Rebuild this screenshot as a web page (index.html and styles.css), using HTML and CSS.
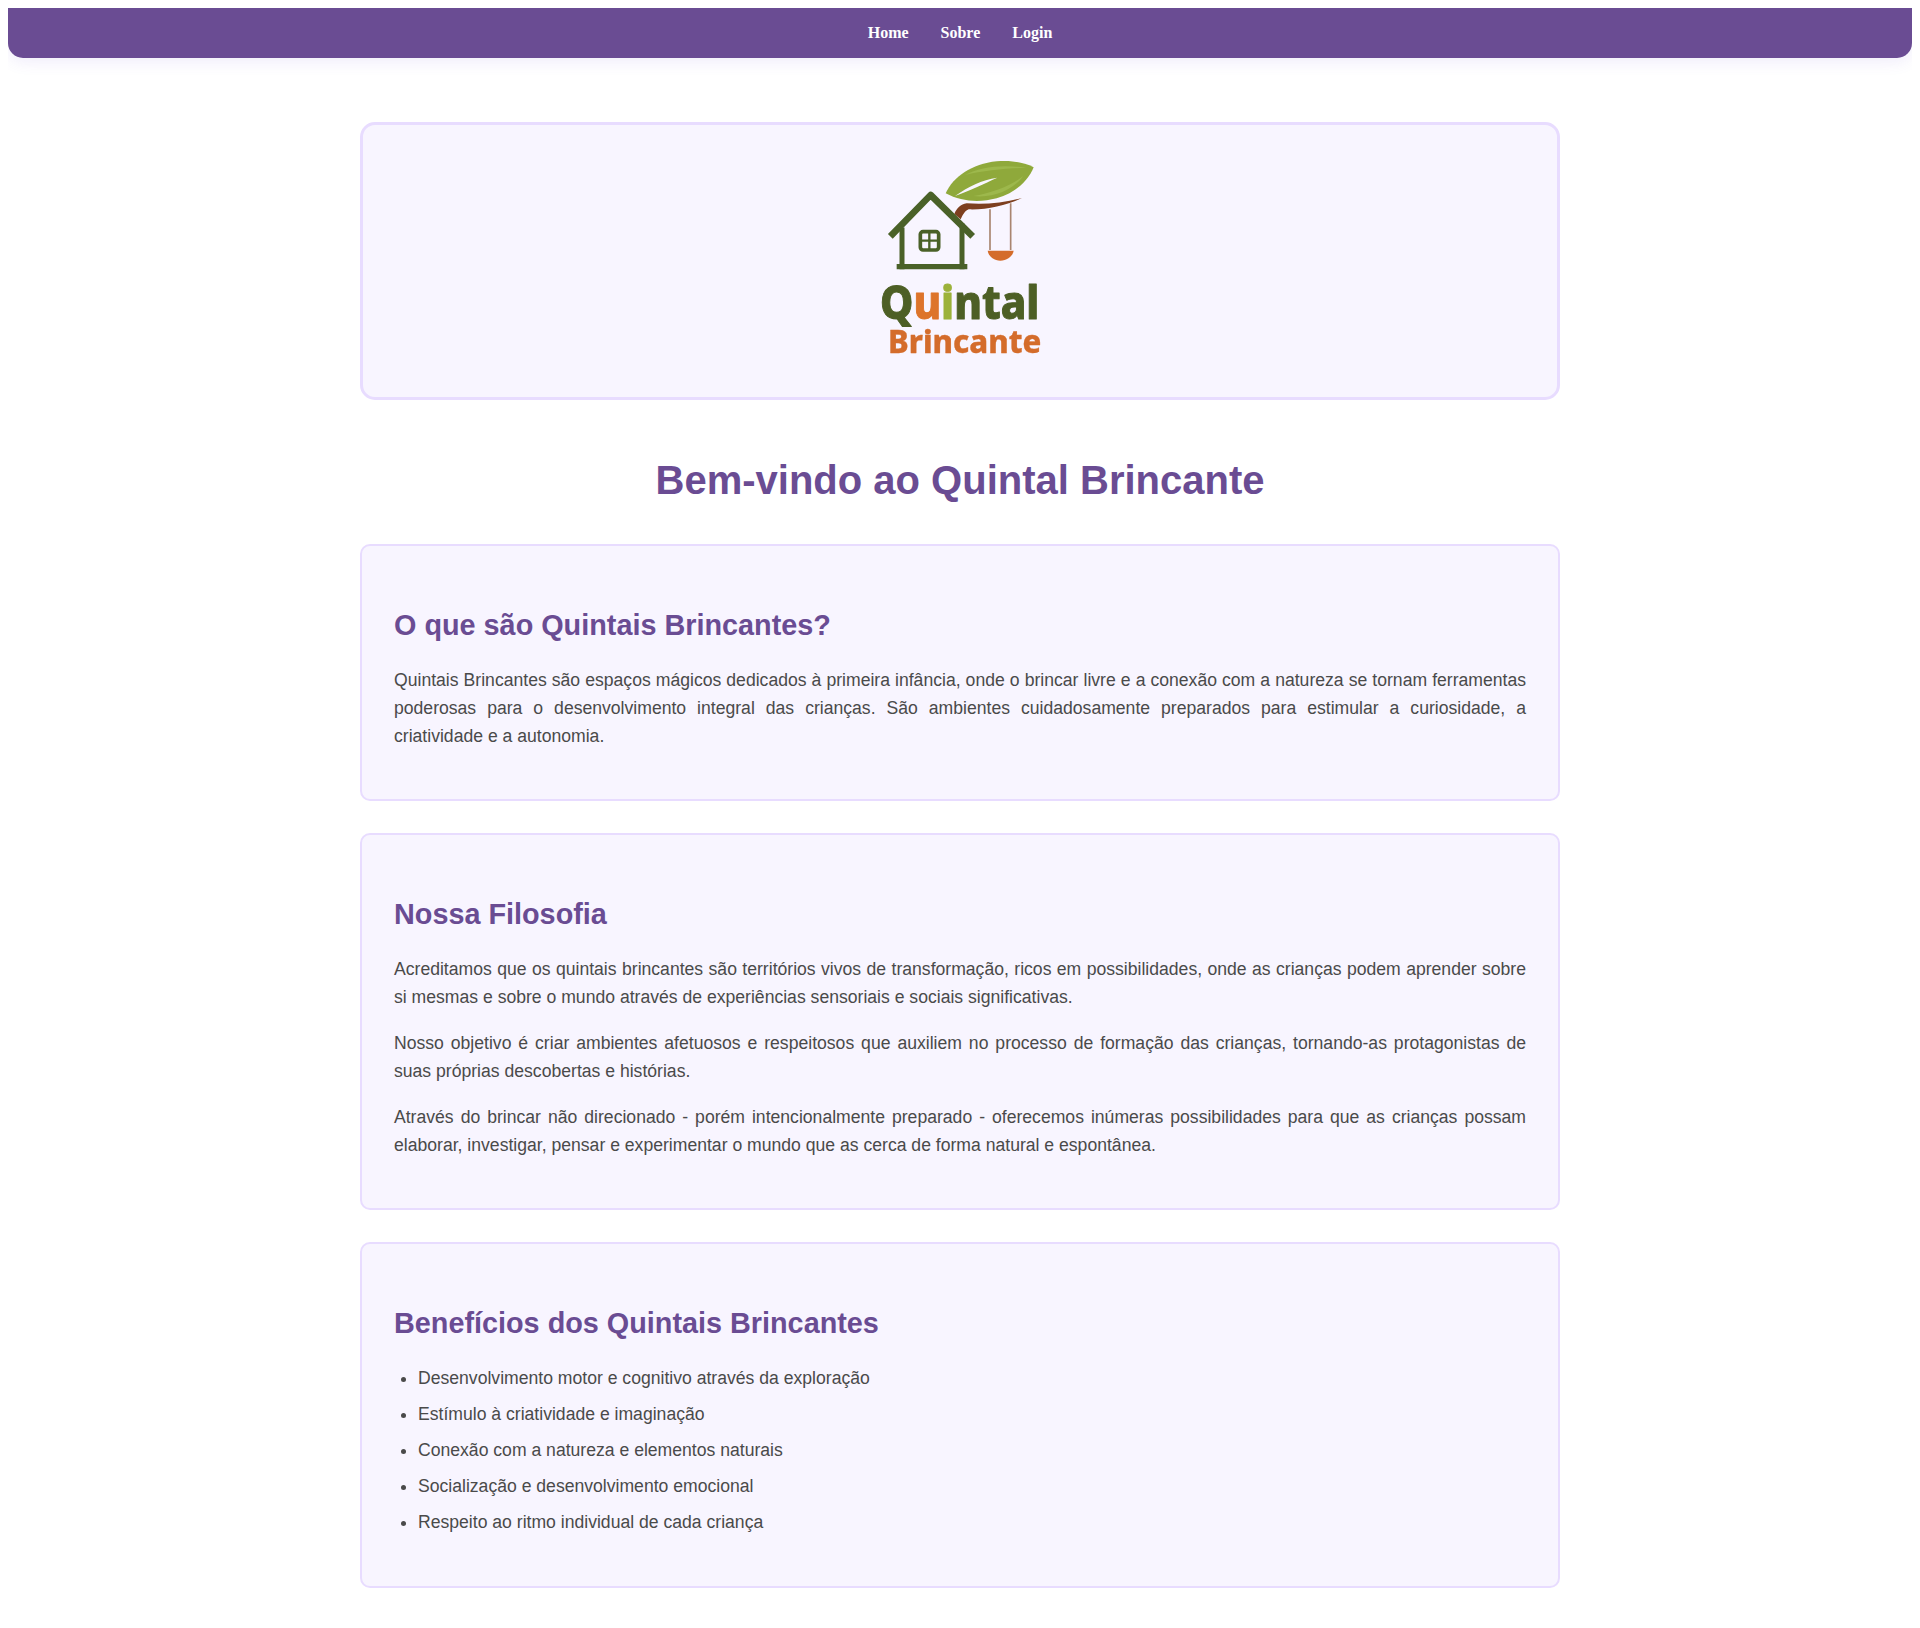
FILE: index.html
```html
<!DOCTYPE html>
<html lang="pt-BR">
<head>
<meta charset="utf-8">
<title>Quintal Brincante</title>
<link rel="stylesheet" href="styles.css">
</head>
<body>
<nav class="navbar">
  <a href="#">Home</a>
  <a href="#">Sobre</a>
  <a href="#">Login</a>
</nav>
<main class="container">
  <div class="hero">
    <svg class="logo" viewBox="0 0 720 720" width="240" height="240" role="img" aria-label="Quintal Brincante">
      <path class="leaf" d="M317 160C340 110 395 72 470 64C515 60 555 68 581 82C565 122 525 160 470 175C420 188 365 186 317 160Z"/>
      <path class="leaf-light" d="M375 105C420 80 490 72 560 84C500 84 430 92 375 105ZM400 168C450 160 510 140 550 108C520 150 460 175 400 168Z"/>
      <path class="vein" d="M345 168C385 140 425 120 472 113C430 132 395 150 345 168Z"/>
      <path class="branch" d="M343 222C350 205 362 192 380 190C430 194 490 190 546 174C500 196 440 210 386 208C375 212 368 225 362 238Z"/>
      <path class="rope" d="M450 208V330M512 190V330"/>
      <path class="seat" d="M443 332H521C518 350 500 362 481 362C462 362 446 350 443 332Z"/>
      <path class="wall" d="M186 270V380M366 258V380"/>
      <path class="base" d="M178 380H374"/>
      <path class="roof" d="M151 289L272 165L398 289"/>
      <rect class="window" x="241" y="275" width="55" height="55" rx="8"/>
      <path class="window-bar" d="M268 275V330M241 302H296"/>
      <text class="logo-q" x="120" y="538" textLength="478" lengthAdjust="spacingAndGlyphs">Q<tspan class="logo-or">u</tspan><tspan class="logo-li">i</tspan>ntal</text>
      <text class="logo-b" x="144" y="640" textLength="460" lengthAdjust="spacingAndGlyphs">Brincante</text>
    </svg>
  </div>
  <h1>Bem-vindo ao Quintal Brincante</h1>
  <section class="card">
    <h2>O que são Quintais Brincantes?</h2>
    <p>Quintais Brincantes são espaços mágicos dedicados à primeira infância, onde o brincar livre e a conexão com a natureza se tornam ferramentas poderosas para o desenvolvimento integral das crianças. São ambientes cuidadosamente preparados para estimular a curiosidade, a criatividade e a autonomia.</p>
  </section>
  <section class="card">
    <h2>Nossa Filosofia</h2>
    <p>Acreditamos que os quintais brincantes são territórios vivos de transformação, ricos em possibilidades, onde as crianças podem aprender sobre si mesmas e sobre o mundo através de experiências sensoriais e sociais significativas.</p>
    <p>Nosso objetivo é criar ambientes afetuosos e respeitosos que auxiliem no processo de formação das crianças, tornando-as protagonistas de suas próprias descobertas e histórias.</p>
    <p>Através do brincar não direcionado - porém intencionalmente preparado - oferecemos inúmeras possibilidades para que as crianças possam elaborar, investigar, pensar e experimentar o mundo que as cerca de forma natural e espontânea.</p>
  </section>
  <section class="card">
    <h2>Benefícios dos Quintais Brincantes</h2>
    <ul>
      <li>Desenvolvimento motor e cognitivo através da exploração</li>
      <li>Estímulo à criatividade e imaginação</li>
      <li>Conexão com a natureza e elementos naturais</li>
      <li>Socialização e desenvolvimento emocional</li>
      <li>Respeito ao ritmo individual de cada criança</li>
    </ul>
  </section>
</main>
</body>
</html>
```
FILE: styles.css
```css
* { box-sizing: border-box; }
body {
  margin: 8px;
  background: #fff;
  color: #4a4a4a;
  font-family: "Liberation Sans", Arial, sans-serif;
  font-size: 17.6px;
  line-height: 1.6;
}
.navbar {
  display: flex;
  justify-content: center;
  align-items: center;
  gap: 32px;
  height: 50px;
  background: #6a4c93;
  border-radius: 0 0 15px 15px;
  box-shadow: 0 4px 15px rgba(106, 76, 220, 0.1);
  font-family: "Liberation Serif", "Times New Roman", serif;
}
.navbar a {
  color: #fff;
  font-size: 16px;
  font-weight: 700;
  text-decoration: none;
}
.container {
  width: 1200px;
  margin: 64px auto 0;
}
.hero {
  display: flex;
  justify-content: center;
  height: 278px;
  padding-top: 15px;
  background: #f8f5ff;
  border: 3px solid #e8dcff;
  border-radius: 15px;
}
.logo { display: block; filter: blur(0.35px); }
.leaf { fill: #8fa93b; }
.leaf-light { fill: #9db84c; }
.vein { fill: #f8f5ff; }
.branch { fill: #7d3f1f; }
.rope { fill: none; stroke: #a98570; stroke-width: 5; }
.seat { fill: #d46c2b; }
.wall, .base, .roof, .window, .window-bar { fill: none; stroke: #4a6128; stroke-linecap: square; }
.wall { stroke-width: 15; }
.base { stroke-width: 16; }
.roof { stroke-width: 20; stroke-linejoin: round; stroke-linecap: butt; }
.window { stroke-width: 11; }
.window-bar { stroke-width: 7; stroke-linecap: butt; }
.logo-q, .logo-b {
  font-family: "Noto Sans", sans-serif;
  font-weight: 800;
  stroke-linejoin: round;
}
.logo-q { font-size: 140px; stroke-width: 3; fill: #4d5f25; stroke: #4d5f25; }
.logo-or { fill: #dd742b; stroke: #dd742b; }
.logo-li { fill: #9cb23a; stroke: #9cb23a; }
.logo-b { font-size: 94px; stroke-width: 1; fill: #d46c2b; stroke: #d46c2b; }
h1 {
  margin: 57px 0 41px;
  color: #6a4c93;
  font-size: 40px;
  line-height: 46px;
  font-weight: 700;
  text-align: center;
}
.card {
  margin-bottom: 32px;
  padding: 32px 32px 31px;
  background: #f8f5ff;
  border: 2px solid #e8dcff;
  border-radius: 10px;
}
h2 {
  margin: 31px 0 24px;
  color: #6a4c93;
  font-size: 28.8px;
  line-height: 33px;
  font-weight: 700;
}
p {
  margin: 0 0 17.6px;
  text-align: justify;
}
ul {
  margin: 0 0 19px;
  padding-left: 24px;
}
li { margin-bottom: 8px; }
```
